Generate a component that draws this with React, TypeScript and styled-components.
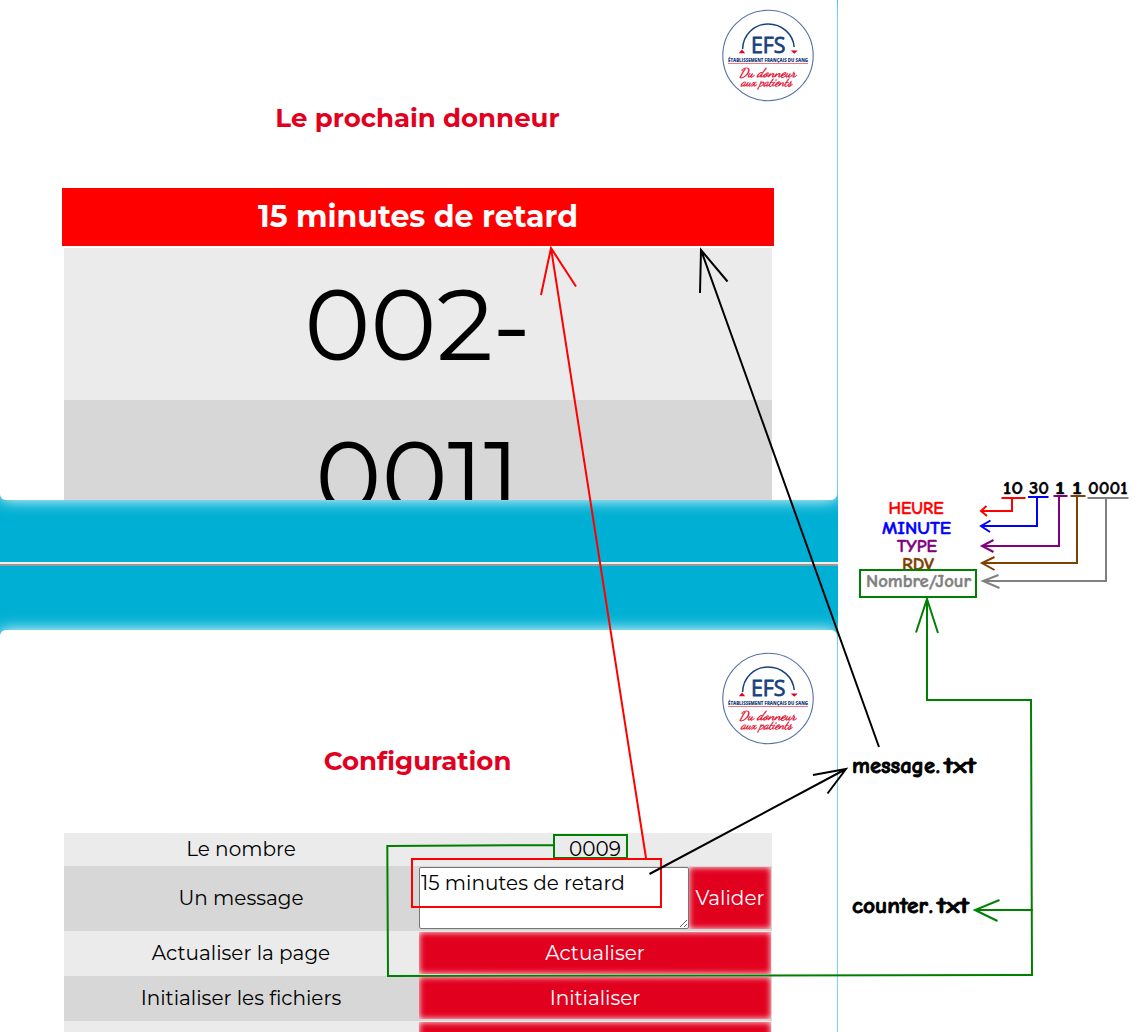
import React from "react";
import styled, { createGlobalStyle } from "styled-components";

const GlobalStyle = createGlobalStyle`
  *, *::before, *::after { box-sizing: border-box; }
  body { margin: 0; background: #fff; overflow: hidden; }
`;

const Board = styled.main`
  position: relative;
  display: flex;
  width: 1146px;
  height: 1032px;
  overflow: hidden;
  font-family: Montserrat, Inter, "Liberation Sans", sans-serif;
  color: #000;
`;

const Site = styled.div`
  display: flex;
  flex-direction: column;
  width: 838px;
  height: 1032px;
  overflow: hidden;
  background: #00b0d4;
`;

const Panel = styled.section<{ $height: number; $edge: "top" | "bottom" }>`
  flex: none;
  width: 837px;
  height: ${(p) => p.$height}px;
  overflow: hidden;
  background: #fff;
  border-radius: ${(p) => (p.$edge === "top" ? "6px 6px 0 0" : "0 0 6px 6px")};
  box-shadow: 0 0 15px #fff;
`;

const Band = styled.div`
  flex: none;
  height: 130px;
  padding-top: 62px;
`;

const Divider = styled.hr`
  width: 100%;
  height: 4px;
  margin: 0;
  border: solid;
  border-width: 2px 0;
  border-color: #eeeeee transparent #9a9a9a;
`;

const PanelHeader = styled.header<{ $offset?: number }>`
  display: flex;
  justify-content: flex-end;
  height: ${(p) => 103 + (p.$offset ?? 0)}px;
  padding: ${(p) => 9 + (p.$offset ?? 0)}px 22px 0 0;
`;

const Title = styled.h1`
  margin: 0;
  height: 30px;
  padding-right: 2px;
  line-height: 30px;
  font-size: 26px;
  font-weight: 700;
  text-align: center;
  color: #e2001f;
`;

const Alert = styled.div`
  width: 712px;
  height: 58px;
  margin: 55px 0 2px 62px;
  background: #f00;
  color: #fff;
  font-size: 30px;
  font-weight: 700;
  line-height: 57px;
  text-align: center;
`;

const Queue = styled.div`
  margin-left: 64px;
  width: 708px;
`;

const Ticket = styled.div<{ $dark?: boolean }>`
  height: 152px;
  padding-right: 1px;
  line-height: 152px;
  font-size: 100px;
  text-align: center;
  background: ${(p) => (p.$dark ? "#d7d7d7" : "#ebebeb")};
`;

const Settings = styled.div`
  width: 708px;
  margin: 57px 0 0 64px;
  font-size: 20px;
`;

const Row = styled.div<{ $height: number; $dark?: boolean }>`
  display: grid;
  grid-template-columns: 355px 352px;
  align-items: center;
  height: ${(p) => p.$height}px;
  background: ${(p) => (p.$dark ? "#d7d7d7" : "#ebebeb")};
`;

const Label = styled.div`
  padding-right: 1px;
  text-align: center;
  line-height: 30px;
  margin-bottom: 1px;
`;

const Control = styled.div`
  display: flex;
  justify-content: center;
  align-items: center;
  margin-bottom: 1px;
`;

const Message = styled.textarea`
  width: 270px;
  height: 62px;
  margin: 0;
  padding: 3px 1px;
  border: 1px solid #767676;
  border-radius: 2px;
  background: #fff;
  color: #000;
  font: 20px/25px Montserrat, Inter, sans-serif;
  resize: both;
`;

const Button = styled.button<{ $width: number; $height: number }>`
  width: ${(p) => p.$width}px;
  height: ${(p) => p.$height}px;
  padding: 0;
  border: 0;
  background: #e2001f;
  box-shadow: inset 0 0 6px #fff;
  color: #fff;
  font: 20px/24px Montserrat, Inter, sans-serif;
`;

const LogoArt = styled.svg`
  display: block;
  width: 94px;
  height: 94px;
  overflow: visible;
`;

const Overlay = styled.svg`
  position: absolute;
  inset: 0;
  width: 1146px;
  height: 1032px;
  pointer-events: none;
`;

const Note = styled.text<{ $size?: number; $stroke?: number }>`
  font-family: "Comic Sans MS", "Comic Neue", Lato, sans-serif;
  font-size: ${(p) => p.$size ?? 17.5}px;
  font-weight: 700;
  stroke-width: ${(p) => p.$stroke ?? 0.4}px;
`;

const Logo = () => (
  <LogoArt viewBox="721 9 94 94">
    <circle cx="768" cy="55.5" r="45.2" fill="#fff" stroke="#5272a4" strokeWidth="1.1" />
    <path d="M742.6 49 C743 35 754 24 768 24 S793 34 794.2 47" fill="none" stroke="#17407e" strokeWidth="1.5" />
    <path d="M738.8 53.2 L742 49.5 L745.2 53.2Z M790.8 50.4 H797.6 L794.3 53.8Z" fill="#e2001f" />
    <text x="751" y="53" textLength="34.5" lengthAdjust="spacingAndGlyphs" fontFamily="'Open Sans', sans-serif" fontSize="22.5" fill="#17407e" stroke="#17407e" strokeWidth=".8">EFS</text>
    <text x="728" y="62" textLength="80" lengthAdjust="spacingAndGlyphs" fontFamily="'Open Sans', sans-serif" fontWeight="800" fontSize="5" fill="#17407e">ÉTABLISSEMENT FRANÇAIS DU SANG</text>
    <path d="M728 63.5H808" stroke="#ed6675" strokeWidth=".9" />
    <g fontFamily="'Dancing Script', 'Kaushan Script', Caveat, 'Comic Neue', cursive" fontStyle="italic" fontWeight="400" fill="#e2001f" stroke="#e2001f" strokeWidth=".3">
      <text x="739" y="77.2" textLength="57" lengthAdjust="spacingAndGlyphs" fontSize="13">Du donneur</text>
      <text x="741" y="86.2" textLength="51" lengthAdjust="spacingAndGlyphs" fontSize="12.5">aux patients</text>
    </g>
  </LogoArt>
);

type NoteSpec = { text: string; x: number; y: number; w: number; color?: string };

const notes: NoteSpec[] = [
  { text: "10", x: 1003, y: 494, w: 20 },
  { text: "30", x: 1029, y: 494, w: 20 },
  { text: "1", x: 1055, y: 494, w: 10 },
  { text: "1", x: 1072, y: 494, w: 10 },
  { text: "0001", x: 1088, y: 494, w: 39.5 },
  { text: "HEURE", x: 888.5, y: 514, w: 55, color: "#f00" },
  { text: "MINUTE", x: 882, y: 534, w: 69, color: "#00f" },
  { text: "TYPE", x: 897, y: 552, w: 40, color: "#800080" },
  { text: "RDV", x: 902, y: 569.5, w: 32, color: "#804000" },
  { text: "Nombre/Jour", x: 866, y: 587.3, w: 105, color: "#808080" },
];

const files = [
  { name: "message", y: 773, w: 83, dot: 936, ext: 944 },
  { name: "counter", y: 913, w: 76, dot: 929, ext: 937 },
];

const arrows: { color: string; d: string }[] = [
  { color: "#f00", d: "M1001.5 498H1025.5 M1012 498V511H981 M986.5 506L981 511L987 516" },
  { color: "#00f", d: "M1028 497H1048.5 M1037 497V526H981 M990.5 520.5L981 526L990 532" },
  { color: "#800080", d: "M1053.5 496H1067.5 M1059 496V546H982 M993.5 540L982 546L993.5 552" },
  { color: "#804000", d: "M1070.5 496H1085.5 M1077 496V563H982 M994.5 557L982 563L994.5 570" },
  { color: "#808080", d: "M1087.5 498H1128.5 M1106 498V581H983 M998.5 575L983 581L999.5 588" },
  { color: "#008000", d: "M860 570H976V597H860Z M916 632.5L927 599L938 633 M927 599V700H1031L1032 975L388 976L387.3 846L554 845 M554 835H627V858H554Z M1033 910H975 M999.5 900L975 910L997.5 921" },
  { color: "#f00", d: "M541 295L551 248L576 286.5 M551 248L646 858 M412 859H661V907H412Z" },
  { color: "#000", d: "M700 293L701 250L727.5 281.5 M701 250L879 747 M649.5 874L846 769 M813 775L846 769L827.5 793.5" },
];

export default function App() {
  return (
    <Board>
      <GlobalStyle />
      <Site>
        <Panel $height={500} $edge="bottom">
          <PanelHeader><Logo /></PanelHeader>
          <Title>Le prochain donneur</Title>
          <Alert>15 minutes de retard</Alert>
          <Queue>
            <Ticket>002-</Ticket>
            <Ticket $dark>0011</Ticket>
          </Queue>
        </Panel>
        <Band><Divider /></Band>
        <Panel $height={420} $edge="top">
          <PanelHeader $offset={13}><Logo /></PanelHeader>
          <Title>Configuration</Title>
          <Settings>
            <Row $height={33}>
              <Label>Le nombre</Label>
              <Control>0009</Control>
            </Row>
            <Row $height={65} $dark>
              <Label>Un message</Label>
              <Control>
                <Message defaultValue="15 minutes de retard" spellCheck={false} />
                <Button $width={82} $height={62}>Valider</Button>
              </Control>
            </Row>
            <Row $height={45}>
              <Label>Actualiser la page</Label>
              <Control><Button $width={352} $height={42}>Actualiser</Button></Control>
            </Row>
            <Row $height={45} $dark>
              <Label>Initialiser les fichiers</Label>
              <Control><Button $width={352} $height={42}>Initialiser</Button></Control>
            </Row>
            <Row $height={45}>
              <Label />
              <Control><Button $width={352} $height={42} /></Control>
            </Row>
          </Settings>
        </Panel>
      </Site>
      <Overlay viewBox="0 0 1146 1032">
        {notes.map((n, i) => (
          <Note
            key={i}
            x={n.x}
            y={n.y}
            textLength={n.w}
            lengthAdjust="spacingAndGlyphs"
            fill={n.color ?? "#000"}
            stroke={n.color ?? "#000"}
          >
            {n.text}
          </Note>
        ))}
        {files.map((f) => (
          <Note key={f.name} y={f.y} fill="#000" stroke="#000" $size={21.5} $stroke={0.8}>
            <tspan x={852} textLength={f.w} lengthAdjust="spacingAndGlyphs">{f.name}</tspan>
            <tspan x={f.dot}>.</tspan>
            <tspan x={f.ext} textLength={32} lengthAdjust="spacingAndGlyphs">txt</tspan>
          </Note>
        ))}
        {arrows.map((a, i) => (
          <path key={i} d={a.d} fill="none" stroke={a.color} strokeWidth="2" />
        ))}
      </Overlay>
    </Board>
  );
}
